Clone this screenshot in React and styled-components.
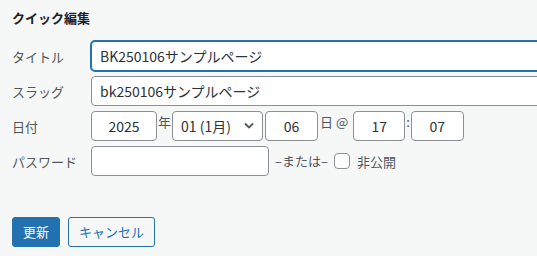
import React from 'react'
import styled, {createGlobalStyle} from 'styled-components'

const GlobalStyle = createGlobalStyle`
  html, body {
    margin: 0;
    padding: 0;
    background: #f6f7f7;
    overflow: hidden;
  }
  body {
    font-family: "Noto Sans CJK JP", "Noto Sans", sans-serif;
    color: #3c434a;
  }
`

const Panel = styled.div`
  width: 537px;
  height: 256px;
  padding: 9px 0 0 12px;
  box-sizing: border-box;
`

const Heading = styled.div`
  font-size: 13px;
  font-weight: 700;
  color: #1d2327;
  line-height: 18px;
  margin-bottom: 14px;
`

const Fields = styled.div`
  display: flex;
  flex-direction: column;
  gap: 5px;
`

const Row = styled.div`
  display: flex;
  align-items: center;
  height: 30px;
`

const Label = styled.span`
  width: 79px;
  flex-shrink: 0;
  font-size: 13px;
  color: #50575e;
`

const TextInput = styled.input`
  box-sizing: border-box;
  width: ${p => p.w}px;
  height: 30px;
  padding: 0 8px;
  margin: 0 0 0 ${p => p.ml || 0}px;
  border: 1px solid ${p => (p.focused ? '#2271b1' : '#8c8f94')};
  box-shadow: ${p => (p.focused ? '0 0 0 1px #2271b1' : 'none')};
  border-radius: 4px;
  background: #fff;
  font-family: "Noto Sans CJK JP", "Noto Sans", sans-serif;
  font-size: 14px;
  color: #2c3338;
  text-align: ${p => (p.center ? 'center' : 'left')};
  outline: none;
  flex-shrink: 0;
`

const Sep = styled.span`
  font-size: 13px;
  color: #50575e;
  margin: ${p => (p.mid ? 0 : -4)}px ${p => p.r ?? 2}px 0 ${p => p.l ?? 2}px;
  line-height: 30px;
  align-self: ${p => (p.mid ? 'center' : 'flex-start')};
`

const SelectWrap = styled.div`
  position: relative;
  width: 91px;
  height: 30px;
  flex-shrink: 0;
`

const Select = styled.select`
  appearance: none;
  box-sizing: border-box;
  width: 100%;
  height: 30px;
  padding: 0 24px 0 8px;
  border: 1px solid #8c8f94;
  border-radius: 4px;
  background: #fff;
  font-family: "Noto Sans CJK JP", "Noto Sans", sans-serif;
  font-size: 14px;
  color: #2c3338;
`

const Chevron = styled.svg`
  position: absolute;
  right: 9px;
  top: 11px;
  pointer-events: none;
`

const Check = styled.span`
  display: inline-block;
  box-sizing: border-box;
  width: 16px;
  height: 16px;
  border: 1px solid #8c8f94;
  border-radius: 4px;
  background: #fff;
  margin: 0 7px 0 6px;
`

const CheckText = styled.span`
  font-size: 13px;
  color: #50575e;
`

const Actions = styled.div`
  display: flex;
  gap: 8px;
  margin-top: 41px;
`

const Button = styled.button`
  box-sizing: border-box;
  height: 30px;
  padding: 0 10px;
  border-radius: 3px;
  border: 1px solid #2271b1;
  background: ${p => (p.primary ? '#2271b1' : '#f6f7f7')};
  color: ${p => (p.primary ? '#fff' : '#2271b1')};
  font-family: "Noto Sans CJK JP", "Noto Sans", sans-serif;
  font-size: 13px;
  line-height: 28px;
`

export default function App() {
  return (
    <>
      <GlobalStyle/>
      <Panel>
        <Heading>クイック編集</Heading>
        <Fields>
          <Row>
            <Label>タイトル</Label>
            <TextInput w={470} focused defaultValue="BK250106サンプルページ"/>
          </Row>
          <Row>
            <Label>スラッグ</Label>
            <TextInput w={470} defaultValue="bk250106サンプルページ"/>
          </Row>
          <Row>
            <Label>日付</Label>
            <TextInput w={66} center defaultValue="2025"/>
            <Sep l={1} r={1}>年</Sep>
            <SelectWrap>
              <Select defaultValue="01">
                <option value="01">01 (1月)</option>
              </Select>
              <Chevron width="10" height="8" viewBox="0 0 10 8">
                <path d="M1 1.5 L5 5.5 L9 1.5" fill="none" stroke="#50575e" strokeWidth="1.8"/>
              </Chevron>
            </SelectWrap>
            <TextInput w={53} ml={2} center defaultValue="06"/>
            <Sep l={2} r={1}>日 @</Sep>
            <TextInput w={52} ml={4} center defaultValue="17"/>
            <Sep l={1} r={1}>:</Sep>
            <TextInput w={53} center defaultValue="07"/>
          </Row>
          <Row>
            <Label>パスワード</Label>
            <TextInput w={178}/>
            <Sep mid l={6} r={0}>–または–</Sep>
            <Check/>
            <CheckText>非公開</CheckText>
          </Row>
        </Fields>
        <Actions>
          <Button primary>更新</Button>
          <Button>キャンセル</Button>
        </Actions>
      </Panel>
    </>
  )
}
